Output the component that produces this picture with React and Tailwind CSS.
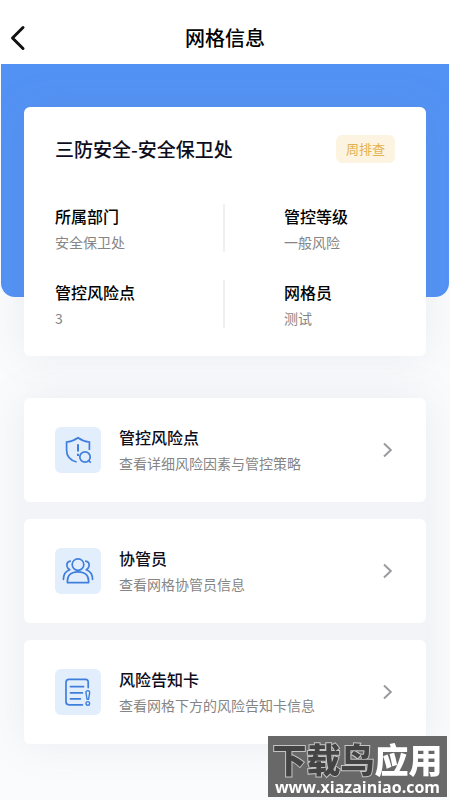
import React from 'react';

const details = [
  { label: '所属部门', value: '安全保卫处' },
  { label: '管控等级', value: '一般风险' },
  { label: '管控风险点', value: '3' },
  { label: '网格员', value: '测试' },
];

const ShieldIcon = () => (
  <svg className="w-7 h-7" viewBox="0 0 28 28" fill="none" stroke="#3f7fdc" strokeWidth="1.7" aria-hidden="true">
    <path d="M12.6 26C6.2 24.2 2.6 20.2 2.6 14.2V6C6.8 5.6 10.4 4.3 14 1.7C17.6 4.3 21.2 5.6 25.4 6V14" />
    <path d="M14 8.2V15.6M14 17.8V20" strokeWidth="2" />
    <circle cx="21" cy="21" r="5.2" />
    <path d="M24.6 24.6L26.8 26.6" />
  </svg>
);

const PeopleIcon = () => (
  <svg className="w-8 h-8" viewBox="0 0 32 32" fill="none" stroke="#3f7fdc" strokeWidth="1.7" strokeLinecap="round" strokeLinejoin="round" aria-hidden="true">
    <circle cx="16" cy="9.6" r="5.8" />
    <path d="M5.4 27.6V26C5.4 20.2 9.4 16.8 16 16.8C22.6 16.8 26.6 20.2 26.6 26V27.6Z" />
    <path d="M8.2 6.2C5.4 6.8 4.6 9 5 11.2C5.4 13 6.4 14 7.8 14.8C3.8 16 1.6 19 1.4 24.4" />
    <path d="M23.8 6.2C26.6 6.8 27.4 9 27 11.2C26.6 13 25.6 14 24.2 14.8C28.2 16 30.4 19 30.6 24.4" />
  </svg>
);

const NoticeIcon = () => (
  <svg className="w-7 h-7" viewBox="0 0 28 28" fill="none" stroke="#3f7fdc" strokeWidth="1.7" strokeLinecap="round" strokeLinejoin="round" aria-hidden="true">
    <path d="M24.2 9.6V4.2C24.2 2.5 23.3 1.4 21.6 1.4H5C3.1 1.4 2 2.5 2 4.4V23.8C2 25.7 3.1 26.8 5 26.8H18.4" />
    <path d="M6.4 8.6H19.6M6.4 14.8H18.4M6.4 20.8H16.4" />
    <path d="M23.8 12.6C25.4 12.6 25.8 13.6 25.6 15L24.6 21.2H23L22 15C21.8 13.6 22.2 12.6 23.8 12.6Z" strokeWidth="1.4" />
    <circle cx="23.8" cy="25.4" r="1.8" strokeWidth="1.4" />
  </svg>
);

const links = [
  { title: '管控风险点', text: '查看详细风险因素与管控策略', Icon: ShieldIcon },
  { title: '协管员', text: '查看网格协管员信息', Icon: PeopleIcon },
  { title: '风险告知卡', text: '查看网格下方的风险告知卡信息', Icon: NoticeIcon },
];

const Header = () => (
  <header className="grid grid-cols-[1fr_auto_1fr] items-center h-16 pt-3 px-2 bg-white">
    <button type="button" aria-label="返回" className="w-6 h-7 flex items-center justify-start">
      <svg className="w-5 h-7" viewBox="0 0 20 28" fill="none" stroke="#111" strokeWidth="3" strokeLinecap="round" strokeLinejoin="round" aria-hidden="true">
        <path d="M15 3.5L4.5 14L15 24.5" />
      </svg>
    </button>
    <h1 className="text-[20px] leading-7 font-medium text-black">网格信息</h1>
  </header>
);

const GridCard = () => (
  <section className="bg-white rounded-md px-[31px] pt-7 pb-7 shadow-[0_0_40px_rgba(110,120,140,0.12)]">
    <div className="flex items-center justify-between">
      <h2 className="text-[19px] leading-7 text-[#0d0d1c] font-medium">三防安全-安全保卫处</h2>
      <span className="bg-[#fdf3e1] text-[#e3b250] text-[13px] leading-7 rounded-md px-[10px]">周排查</span>
    </div>
    <dl className="grid grid-cols-2 gap-y-7 mt-[41px]">
      {details.map((item, index) => (
        <div
          key={item.label}
          className={index % 2 === 0 ? 'h-12 border-r-2 border-[#f0f0f2]' : 'h-12 pl-[59px]'}
        >
          <dt className="text-[16px] leading-6 font-medium text-black">{item.label}</dt>
          <dd className="text-[14px] leading-7 text-[#858585]">{item.value}</dd>
        </div>
      ))}
    </dl>
  </section>
);

const LinkCard = ({ title, text, Icon }) => (
  <a href="#" className="flex items-center bg-white rounded-md h-[104px] px-[31px]">
    <span className="w-[46px] h-[46px] shrink-0 rounded-md bg-[#e3eefc] flex items-center justify-center">
      <Icon />
    </span>
    <span className="flex-1 flex flex-col pt-[2px] ml-[18px]">
      <span className="text-[16px] leading-6 font-medium text-[#0d0d1c]">{title}</span>
      <span className="text-[14px] leading-7 text-[#858585]">{text}</span>
    </span>
    <svg className="w-4 h-4" viewBox="0 0 16 16" fill="none" stroke="#9b9b9f" strokeWidth="2" aria-hidden="true">
      <path d="M5 1.5L11.8 8L5 14.5" />
    </svg>
  </a>
);

const SiteMark = () => (
  <div className="fixed right-[3px] bottom-[3px] w-[179px] h-[61px] bg-[#686868] flex flex-col items-center justify-center text-white">
    <p className="text-[34px] leading-10 font-black whitespace-nowrap">
      <span className="text-[#444] [-webkit-text-stroke:2px_#c4c4c4] [paint-order:stroke_fill]">下载鸟</span>
      应用
    </p>
    <p className="font-['Open_Sans','Noto_Sans',sans-serif] text-[16px] leading-4 font-bold whitespace-nowrap">www.xiazainiao.com</p>
  </div>
);

const App = () => {
  return (
    <div className="min-h-screen bg-[#fafbfd] font-['Noto_Sans_CJK_SC',sans-serif]">
      <Header />
      <div className="h-[233px] mx-px bg-[#5392f5] rounded-b-[14px]"></div>
      <main className="relative -mt-[190px] px-6 pb-14">
        <GridCard />
        <nav className="flex flex-col gap-[17px] mt-[42px] bg-[#f3f4f7] rounded-md shadow-[0_0_40px_rgba(110,120,140,0.12)]">
          {links.map((link) => (
            <LinkCard key={link.title} {...link} />
          ))}
        </nav>
      </main>
      <SiteMark />
    </div>
  );
};

export default App;
